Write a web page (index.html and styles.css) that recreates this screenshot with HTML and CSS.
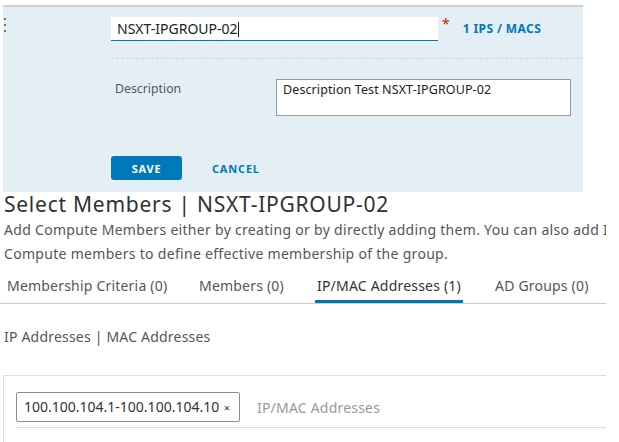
FILE: index.html
```html
<!DOCTYPE html>
<html>
<head>
<meta charset="utf-8">
<link rel="stylesheet" href="styles.css">
</head>
<body>
<div class="panel">
  <div class="grip"><i></i><i></i><i></i></div>
  <div class="form">
    <div class="name-row">
      <div class="name-input">NSXT-IPGROUP-02<span class="caret"></span></div>
      <span class="req">*</span>
      <a class="count">1 IPS / MACS</a>
    </div>
    <div class="dash"></div>
    <div class="desc-row">
      <span class="desc-label">Description</span>
      <div class="desc-box">Description Test NSXT-IPGROUP-02</div>
    </div>
    <div class="btn-row">
      <button class="btn-save">SAVE</button>
      <button class="btn-cancel">CANCEL</button>
    </div>
  </div>
</div>
<h2 class="title">Select Members | NSXT-IPGROUP-02</h2>
<p class="intro">Add Compute Members either by creating or by directly adding them. You can also add Ip/MAC Addresses, AD Groups along with<br>Compute members to define effective membership of the group.</p>
<div class="tabs">
  <div class="tab t1"><span>Membership Criteria (0)</span></div>
  <div class="tab t2"><span>Members (0)</span></div>
  <div class="tab t3 active"><span>IP/MAC Addresses (1)</span></div>
  <div class="tab t4"><span>AD Groups (0)</span></div>
</div>
<div class="subhead">IP Addresses | MAC Addresses</div>
<div class="addr-box">
  <div class="addr-line">
    <span class="chip">100.100.104.1-100.100.104.10 <span class="x">×</span></span>
    <span class="placeholder">IP/MAC Addresses</span>
  </div>
</div>
</body>
</html>
```
FILE: styles.css
```css
* { box-sizing: border-box; }
body {
  margin: 0;
  width: 619px;
  height: 442px;
  overflow: hidden;
  background: #fff;
  font-family: "Noto Sans", "Liberation Sans", sans-serif;
  color: #333;
}
.panel {
  display: flex;
  margin: 5px 0 0 3px;
  width: 580px;
  height: 187px;
  background: #e3eef5;
  border-top: 2px solid #cfd3d6;
}
.grip {
  width: 3px;
  margin-left: 1px;
  padding-top: 11px;
  display: flex;
  flex-direction: column;
  gap: 4px;
}
.grip i {
  display: block;
  width: 2px;
  height: 2px;
  background: #777;
}
.form {
  margin-left: 104px;
  flex: 1;
  padding-top: 10px;
}
.name-row {
  display: flex;
  align-items: flex-start;
}
.name-input {
  width: 327px;
  height: 24px;
  background: #fff;
  border-bottom: 1px solid #0079b8;
  font-size: 14px;
  line-height: 24px;
  padding-left: 6px;
  color: #222;
}
.caret {
  display: inline-block;
  width: 1px;
  height: 15px;
  background: #222;
  vertical-align: -3px;
}
.req {
  color: #c92100;
  font-size: 14px;
  margin-left: 4px;
  line-height: 14px;
}
.count {
  margin-left: 13px;
  color: #0079b8;
  font-weight: 700;
  font-size: 12px;
  letter-spacing: 0.4px;
  line-height: 24px;
}
.dash {
  margin-top: 17px;
  border-top: 1px dashed #cfd6db;
}
.desc-row {
  display: flex;
  margin-top: 20px;
}
.desc-label {
  width: 165px;
  padding-left: 4px;
  font-size: 12.3px;
  color: #565656;
  line-height: 20px;
}
.desc-box {
  width: 295px;
  height: 37px;
  background: #fff;
  border: 1px solid #9a9a9a;
  font-size: 12.5px;
  letter-spacing: 0.1px;
  padding: 2px 6px;
  line-height: 15px;
  color: #222;
}
.btn-row {
  display: flex;
  align-items: center;
  margin-top: 40px;
}
.btn-save {
  width: 71px;
  height: 24px;
  border: none;
  border-radius: 3px;
  background: #0079b8;
  color: #fff;
  font-family: inherit;
  font-weight: 700;
  font-size: 11px;
  letter-spacing: 0.8px;
}
.btn-cancel {
  margin-left: 24px;
  border: none;
  background: none;
  color: #0079b8;
  font-family: inherit;
  font-weight: 700;
  font-size: 11px;
  letter-spacing: 0.8px;
  padding: 0 6px;
}
.title {
  margin: 0 0 0 4px;
  font-size: 21px;
  letter-spacing: 0.75px;
  font-weight: 400;
  line-height: 24px;
  color: #313131;
}
.intro {
  margin: 2px 0 0 4px;
  width: 602px;
  overflow: hidden;
  font-size: 14px;
  letter-spacing: 0.3px;
  line-height: 24px;
  color: #565656;
  white-space: nowrap;
}
.tabs {
  display: flex;
  margin-top: 7px;
  width: 606px;
  border-bottom: 1px solid #ccc;
}
.tab {
  font-size: 14px;
  letter-spacing: 0.2px;
  color: #565656;
  flex: none;
}
.tab span {
  display: inline-block;
  padding: 3px 2px 8px;
}
.t1 { margin-left: 5px; width: 192px; }
.t2 { width: 118px; }
.t3 { width: 178px; }
.tab.active { color: #333; }
.tab.active span { box-shadow: inset 0 -3px 0 #0079b8; }
.subhead {
  margin: 23px 0 0 4px;
  font-size: 14px;
  letter-spacing: 0.2px;
  color: #565656;
}
.addr-box {
  margin: 29px 0 0 3px;
  width: 603px;
  height: 80px;
  border-top: 1px solid #ddd;
  border-left: 1px solid #ddd;
  padding: 16px 0 0 12px;
}
.addr-line {
  display: flex;
  align-items: center;
  border-bottom: 1px solid #ddd;
  padding-bottom: 5px;
}
.chip {
  height: 30px;
  width: 224px;
  border: 1px solid #8c8c8c;
  border-radius: 2px;
  font-size: 14px;
  line-height: 28px;
  padding-left: 7px;
  color: #333;
  white-space: nowrap;
  overflow: hidden;
}
.chip .x { font-size: 11px; margin-left: 1px; }
.placeholder {
  margin-left: 17px;
  font-size: 14px;
  letter-spacing: 0.2px;
  color: #999;
}
```
